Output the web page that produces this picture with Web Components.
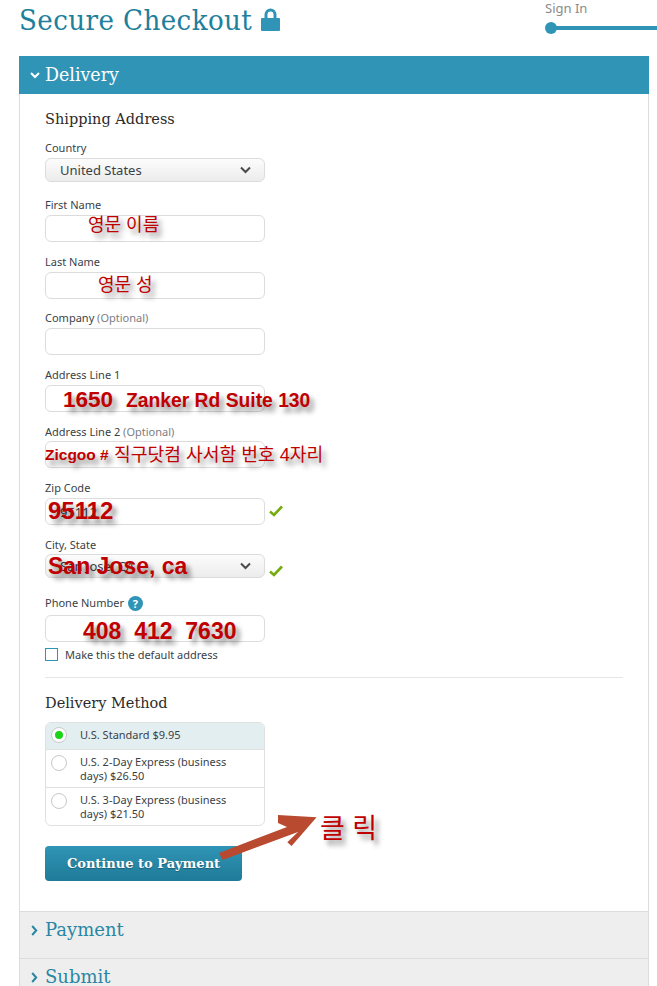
<!DOCTYPE html>
<html lang="en">
<head>
<meta charset="utf-8">
<title>Secure Checkout</title>
<style>
  html, body { margin: 0; padding: 0; background: #fff; }
  body { width: 657px; height: 986px; overflow: hidden; position: relative; font-family: "Noto Sans", "Open Sans", sans-serif; }
</style>
</head>
<body>
<checkout-page>
  <checkout-top></checkout-top>
  <checkout-panel>
    <section-title style="margin-bottom:12px">Shipping Address</section-title>
    <form-field label="Country" kind="select" value="United States"></form-field>
    <form-field label="First Name" style="margin-top:16px"></form-field>
    <form-field label="Last Name" style="margin-top:13px"></form-field>
    <form-field label="Company" optional style="margin-top:12px"></form-field>
    <form-field label="Address Line 1" style="margin-top:13px"></form-field>
    <form-field label="Address Line 2" optional gap="2" style="margin-top:13px"></form-field>
    <form-field label="Zip Code" value="95112" ok style="margin-top:13px"></form-field>
    <form-field label="City, State" kind="select" value="San Jose, CA" ok gap="2" style="margin-top:13px"></form-field>
    <form-field label="Phone Number" help gap="5" style="margin-top:18px"></form-field>
    <default-check>Make this the default address</default-check>
    <section-title style="margin-top:16px;margin-bottom:9px" divider>Delivery Method</section-title>
    <delivery-list></delivery-list>
    <pay-button>Continue to Payment</pay-button>
  </checkout-panel>
  <closed-step>Payment</closed-step>
  <closed-step>Submit</closed-step>
</checkout-page>
<photo-notes></photo-notes>

<script>
const SERIF = '"DejaVu Serif", "Liberation Serif", serif';
const SANS = '"Noto Sans", "Open Sans", sans-serif';

class CheckoutPage extends HTMLElement {
  constructor() {
    super();
    this.attachShadow({ mode: "open" });
    this.shadowRoot.innerHTML = `
      <style>
        :host { display: block; padding-left: 19px; width: 630px; }
      </style>
      <slot></slot>
    `;
  }
}

class CheckoutTop extends HTMLElement {
  constructor() {
    super();
    this.attachShadow({ mode: "open" });
    this.shadowRoot.innerHTML = `
      <style>
        :host { display: flex; justify-content: space-between; height: 56px; width: 638px; }
        .title { display: flex; align-items: flex-start; gap: 9px; }
        h1 {
          margin: 0; font: 400 27px/42px ${SERIF}; color: #20809c;
          letter-spacing: 0.4px; transform-origin: left; transform: scaleX(.97); width: 233px; white-space: nowrap;
        }
        svg { display: block; margin-top: 8px; }
        .progress { width: 112px; }
        .sign { font: 400 13px/16px ${SANS}; color: #8a8a8a; }
        .track { position: relative; height: 4px; background: #3094b6; margin-top: 10px; margin-left: 6px; }
        .track::before {
          content: ""; position: absolute; left: -6px; top: -4px; width: 12px; height: 12px;
          border-radius: 50%; background: #3094b6;
        }
      </style>
      <div class="title">
        <h1>Secure Checkout</h1>
        <svg width="19" height="23" viewBox="0 0 19 23"><path fill="#3094b6" fill-rule="evenodd" d="M1 10h2.500V6.500a6 6 0 0 1 12 0V10H18a1 1 0 0 1 1 1v11a1 1 0 0 1-1 1H1a1 1 0 0 1-1-1V11a1 1 0 0 1 1-1zM6.500 10h6V6.500a3 3 0 0 0-6 0z"/></svg>
      </div>
      <div class="progress">
        <div class="sign">Sign In</div>
        <div class="track"></div>
      </div>
    `;
  }
}

class CheckoutPanel extends HTMLElement {
  constructor() {
    super();
    this.attachShadow({ mode: "open" });
    this.shadowRoot.innerHTML = `
      <style>
        :host { display: block; width: 630px; box-sizing: border-box; }
        header {
          height: 38px; background: #3094b6; color: #fff; display: flex; align-items: center;
          gap: 5px; padding-left: 11px; font: 400 18px/38px ${SERIF};
        }
        header span { display: inline-block; transform-origin: left; transform: scaleX(.97); }
        .body {
          box-sizing: border-box; height: 817px; padding: 15px 25px 0 25px;
          border-left: 1px solid #dcdcdc; border-right: 1px solid #dcdcdc;
        }
      </style>
      <header>
        <svg width="10" height="8" viewBox="0 0 10 8"><path d="M1 2l4 4 4-4" fill="none" stroke="#fff" stroke-width="2"/></svg>
        <span>Delivery</span>
      </header>
      <div class="body"><slot></slot></div>
    `;
  }
}

class SectionTitle extends HTMLElement {
  constructor() {
    super();
    this.attachShadow({ mode: "open" });
    this.shadowRoot.innerHTML = `
      <style>
        :host { display: block; font: 400 14.500px/20px ${SERIF}; color: #2b2b2b; }
        :host([divider]) { border-top: 1px solid #e6e6e6; }
        .rule { display: none; height: 15px; }
        :host([divider]) .rule { display: block; }
        span { display: inline-block; white-space: nowrap; }
      </style>
      <div class="rule"></div>
      <span><slot></slot></span>
    `;
  }
}

class FormField extends HTMLElement {
  connectedCallback() {
    if (this.shadowRoot) return;
    this.attachShadow({ mode: "open" });
    const isSelect = this.getAttribute("kind") === "select";
    const value = this.getAttribute("value") || "";
    const optional = this.hasAttribute("optional") ? ` <em>(Optional)</em>` : "";
    const help = this.hasAttribute("help") ? `<i>?</i>` : "";
    const gap = this.getAttribute("gap") || "3";
    const ok = this.hasAttribute("ok")
      ? `<svg class="ok" width="14" height="12" viewBox="0 0 14 12"><path d="M1 6.500l4 3.500 8-8.500" fill="none" stroke="#75ab0e" stroke-width="2.600"/></svg>`
      : "";
    const arrow = isSelect
      ? `<svg class="arrow" width="11" height="8" viewBox="0 0 11 8"><path d="M1 1.500l4.500 4.500 4.500-4.500" fill="none" stroke="#4a4a4a" stroke-width="2"/></svg>`
      : "";
    this.shadowRoot.innerHTML = `
      <style>
        :host { display: block; }
        label { display: flex; align-items: center; gap: 4px; height: 14px; margin-bottom: ${gap}px; font: 400 11px/14px ${SANS}; color: #3a3f47; }
        label span { white-space: pre; }
        em { font-style: normal; color: #7d7d85; }
        i {
          width: 15px; height: 15px; border-radius: 50%; background: #3094b6; color: #fff;
          font: 700 11px/15px ${SANS}; text-align: center;
        }
        .row { display: flex; gap: 4px; width: 240px; }
        .control {
          box-sizing: border-box; flex: 0 0 220px; height: ${isSelect ? 24 : 27}px; border: 1px solid #dcdcdc; border-radius: 6px;
          background: ${isSelect ? "linear-gradient(#fcfcfc,#ececec)" : "#fff"};
          display: flex; align-items: center; justify-content: space-between;
          padding: 0 13px 0 14px; font: 400 13px/20px ${SANS}; color: #3a3f47;
        }
        .ok { align-self: center; margin-top: ${isSelect ? 9 : -2}px; }
      </style>
      <label><span>${this.getAttribute("label")}${optional}</span>${help}</label>
      <div class="row">
        <div class="control"><span>${value}</span>${arrow}</div>
        ${ok}
      </div>
    `;
  }
}

class DefaultCheck extends HTMLElement {
  constructor() {
    super();
    this.attachShadow({ mode: "open" });
    this.shadowRoot.innerHTML = `
      <style>
        :host { display: flex; align-items: center; gap: 7px; margin-top: 6px; font: 400 11px/13px ${SANS}; color: #3a3f47; }
        b { box-sizing: border-box; width: 13px; height: 13px; border: 1px solid #3094b6; background: #fff; }
      </style>
      <b></b><span><slot></slot></span>
    `;
  }
}

class DeliveryList extends HTMLElement {
  constructor() {
    super();
    this.attachShadow({ mode: "open" });
    this.shadowRoot.innerHTML = `
      <style>
        :host {
          display: block; box-sizing: border-box; width: 220px; border: 1px solid #e0e0e0; border-radius: 6px;
          overflow: hidden; font: 400 11px/14px ${SANS}; color: #3a3f47;
        }
        .opt { display: flex; gap: 13px; padding: 5px 20px 5px 5px; height: 38px; box-sizing: border-box; border-top: 1px solid #e0e0e0; }
        .opt:first-of-type { border-top: 0; background: #e3eef0; height: 26px; padding-top: 4px; }
        .opt:first-of-type .text { margin-top: 1px; }
        .dot {
          box-sizing: border-box; flex: 0 0 16px; height: 16px; border-radius: 50%; border: 1px solid #c8c8c8;
          background: #fff; position: relative;
        }
        .on::after {
          content: ""; position: absolute; left: 3px; top: 3px; width: 8px; height: 8px; border-radius: 50%; background: #1ad41a;
        }
      </style>
      <div class="opt"><div class="dot on"></div><div class="text">U.S. Standard $9.95</div></div>
      <div class="opt"><div class="dot"></div><div class="text">U.S. 2-Day Express (business days) $26.50</div></div>
      <div class="opt"><div class="dot"></div><div class="text">U.S. 3-Day Express (business days) $21.50</div></div>
    `;
  }
}

class PayButton extends HTMLElement {
  constructor() {
    super();
    this.attachShadow({ mode: "open" });
    this.shadowRoot.innerHTML = `
      <style>
        :host {
          display: flex; align-items: center; justify-content: center; box-sizing: border-box;
          width: 197px; height: 35px; margin-top: 20px; border-radius: 4px;
          background: linear-gradient(#3094b6, #1f7b98); color: #fff;
          font: 700 13px/20px ${SERIF}; text-shadow: 0 1px 1px rgba(0,0,0,.3);
        }
        span { display: inline-block; white-space: nowrap; }
      </style>
      <span><slot></slot></span>
    `;
  }
}

class ClosedStep extends HTMLElement {
  constructor() {
    super();
    this.attachShadow({ mode: "open" });
    this.shadowRoot.innerHTML = `
      <style>
        :host {
          display: flex; align-items: center; gap: 7px; box-sizing: border-box; width: 630px; height: 47px;
          padding: 0 0 10px 11px; background: #eeeeee; border: 1px solid #dcdcdc; border-bottom: 0;
          color: #2a86a3; font: 400 18px/24px ${SERIF};
        }
        span { display: inline-block; white-space: nowrap; }
      </style>
      <svg width="7" height="11" viewBox="0 0 7 11"><path d="M1.200 1l4 4.500-4 4.500" fill="none" stroke="#2a86a3" stroke-width="2"/></svg>
      <span><slot></slot></span>
    `;
  }
}

// 스크린샷 위에 손으로 적어 넣은 빨간 안내 글씨와 화살표
class PhotoNotes extends HTMLElement {
  constructor() {
    super();
    this.attachShadow({ mode: "open" });
    const notes = [
      ["영문 이름", 88, 215, 18, 400],
      ["영문 성", 98, 275, 18, 400],
      ["1650", 63, 386, 22.5, 700],
      ["Zanker Rd Suite 130", 126, 389, 19.3, 700],
      ["Zicgoo #", 45, 446, 15.5, 700],
      ["직구닷컴 사서함 번호 4자리", 114, 445, 18.2, 400],
      ["95112", 48, 497, 24, 700],
      ["San Jose, ca", 48, 553, 23, 700],
      ["408  412  7630", 83, 618, 23, 700],
      ["클 릭", 320, 813, 27, 400]
    ];
    const spans = notes.map(([text, x, y, size, weight]) =>
      `<span style="left:${x}px;top:${y}px;font-size:${size}px;font-weight:${weight}">${text}</span>`
    ).join("");
    this.shadowRoot.innerHTML = `
      <style>
        :host { position: absolute; inset: 0; display: block; pointer-events: none; }
        span {
          position: absolute; white-space: pre; color: #c00000; line-height: 1.2;
          font-family: "Liberation Sans", "Noto Sans CJK KR", sans-serif;
          text-shadow: 4px 5px 5px rgba(0,0,0,.45);
        }
        svg { position: absolute; left: 0; top: 0; }
      </style>
      <svg width="657" height="986"><path fill="#b94a30" d="M219 853L287 827 278 823 278 815 316.600 817.300 291.600 846 287.300 842.300 298 832 222.700 860z"/></svg>
      ${spans}
    `;
  }
}

customElements.define("checkout-page", CheckoutPage);
customElements.define("checkout-top", CheckoutTop);
customElements.define("checkout-panel", CheckoutPanel);
customElements.define("section-title", SectionTitle);
customElements.define("form-field", FormField);
customElements.define("default-check", DefaultCheck);
customElements.define("delivery-list", DeliveryList);
customElements.define("pay-button", PayButton);
customElements.define("closed-step", ClosedStep);
customElements.define("photo-notes", PhotoNotes);
</script>
</body>
</html>
